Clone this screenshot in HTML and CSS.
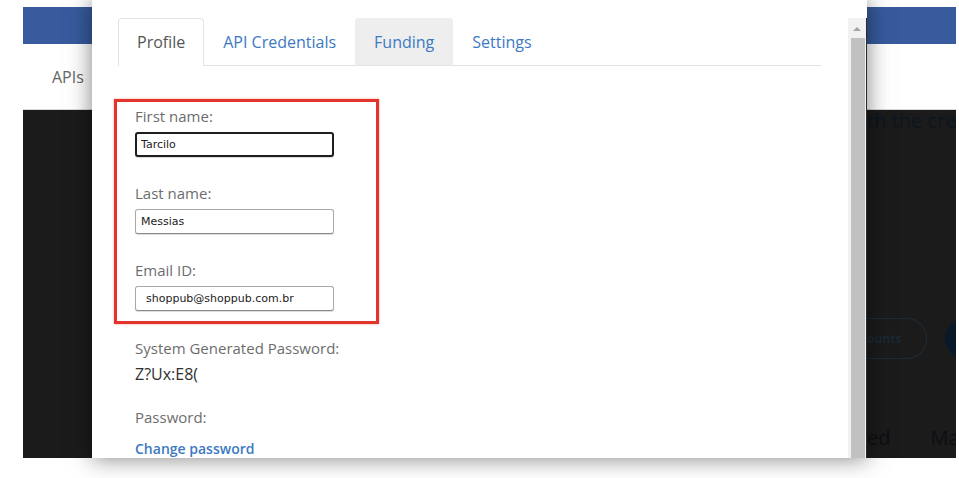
FILE: index.html
```html
<!DOCTYPE html>
<html lang="en">
<head>
    <meta charset="UTF-8">
    <title>My Account - Profile</title>
    <link rel="stylesheet" href="styles.css">
</head>
<body>
    <div class="page">
        <div class="topbar"></div>
        <div class="nav">
            <span class="nav-link">APIs</span>
        </div>
        <div class="backdrop">
            <div class="behind">
                <p class="behind-title">th the cred</p>
                <div class="behind-buttons">
                    <span class="pill">ounts</span>
                    <span class="dot"></span>
                </div>
                <div class="behind-cols">
                    <span>ed</span>
                    <span>Ma</span>
                </div>
            </div>
        </div>
    </div>

    <!-- Account modal -->
    <div class="modal">
        <div class="modal-body">
            <ul class="tabs">
                <li class="tab active">Profile</li>
                <li class="tab">API Credentials</li>
                <li class="tab hover">Funding</li>
                <li class="tab">Settings</li>
            </ul>

            <div class="highlight">
                <label for="firstName">First name:</label>
                <input type="text" id="firstName" class="focused" value="Tarcilo">

                <label for="lastName">Last name:</label>
                <input type="text" id="lastName" value="Messias">

                <label for="email">Email ID:</label>
                <input type="text" id="email" class="email" value="shoppub@shoppub.com.br">
            </div>

            <div class="info">
                <p class="info-label">System Generated Password:</p>
                <p class="info-value">Z?Ux:E8(</p>

                <p class="info-label spaced">Password:</p>
                <a class="change-link" href="#">Change password</a>
            </div>
        </div>

        <div class="scrollbar">
            <span class="scroll-arrow"></span>
            <span class="scroll-thumb"></span>
        </div>
    </div>
</body>
</html>
```

FILE: styles.css
```css
* {
    box-sizing: border-box;
}
body {
    margin: 0;
    background: #fff;
    font-family: "Open Sans", Arial, sans-serif;
    width: 959px;
    height: 478px;
    overflow: hidden;
    position: relative;
}
.page {
    margin: 7px 3px 0 23px;
    height: 451px;
    display: flex;
    flex-direction: column;
}
.topbar {
    height: 37px;
    background: #375b9d;
}
.nav {
    height: 66px;
    background: #fff;
    border-bottom: 1px solid #d8d8d8;
    padding-left: 29px;
    display: flex;
    align-items: center;
}
.nav-link {
    font-size: 16px;
    color: #666;
}
.backdrop {
    flex: 1;
    background: #1b1b1b;
    overflow: hidden;
}
.behind {
    padding-left: 844px;
    white-space: nowrap;
}
.behind-title {
    margin: 0;
    font-size: 20px;
    line-height: 22px;
    color: #0b1620;
}
.behind-buttons {
    margin-top: 186px;
    display: flex;
    gap: 18px;
    align-items: center;
}
.pill {
    flex-shrink: 0;
    height: 41px;
    width: 60px;
    border: 1px solid #1f2c38;
    border-left: none;
    border-radius: 0 21px 21px 0;
    display: flex;
    align-items: center;
    font-size: 12px;
    font-weight: 700;
    color: #1a2835;
}
.dot {
    flex-shrink: 0;
    width: 41px;
    height: 41px;
    border-radius: 50%;
    background: #0a1929;
}
.behind-cols {
    margin-top: 65px;
    display: flex;
    gap: 40px;
    font-size: 20px;
    color: #0b0f14;
}

/* modal */
.modal {
    position: absolute;
    left: 92px;
    top: 0;
    width: 775px;
    height: 458px;
    background: #fff;
    box-shadow: 0 0 22px rgba(0, 0, 0, 0.5);
    overflow: hidden;
}
.modal-body {
    padding: 18px 0 0 26px;
    width: 729px;
}
.tabs {
    list-style: none;
    margin: 0;
    padding: 0;
    display: flex;
    border-bottom: 1px solid #e3e3e3;
}
.tab {
    height: 47px;
    line-height: 47px;
    padding: 0 18px;
    font-size: 16px;
    color: #3d79c2;
    border: 1px solid transparent;
    border-bottom: none;
    border-radius: 4px 4px 0 0;
    margin-bottom: -1px;
}
.tab.active {
    color: #555;
    background: #fff;
    border-color: #e3e3e3;
    height: 48px;
}
.tab.hover {
    background: #eee;
}
.highlight {
    margin: 33px 0 0 -4px;
    width: 265px;
    border: 3px solid #e3342c;
    box-shadow: 0 0 2px rgba(227, 52, 44, 0.5);
    padding: 4px 0 10px 18px;
    display: flex;
    flex-direction: column;
    align-items: flex-start;
}
.highlight label {
    font-size: 15px;
    line-height: 20px;
    color: #6d6d6d;
}
.highlight input {
    margin: 6px 0 26px;
    width: 199px;
    height: 25px;
    border: 1px solid #a9a9a9;
    border-bottom-color: #8a8a8a;
    border-radius: 3px;
    padding: 0 5px;
    font-family: "DejaVu Sans", Verdana, sans-serif;
    font-size: 11px;
    color: #222;
    box-shadow: 0 1px 1px rgba(0, 0, 0, 0.15);
}
.highlight input:last-child {
    margin-bottom: 0;
}
.highlight input.focused {
    border: 2px solid #1e1e1e;
    padding: 0 4px;
}
.highlight input.email {
    padding-left: 10px;
}
.info {
    padding: 14px 0 0 17px;
}
.info-label {
    margin: 0;
    font-size: 15px;
    line-height: 20px;
    color: #6d6d6d;
}
.info-label.spaced {
    margin-top: 23px;
}
.info-value {
    margin: 6px 0 0;
    font-size: 16px;
    line-height: 20px;
    color: #2f2f2f;
}
.change-link {
    display: block;
    margin-top: 12px;
    font-size: 14px;
    line-height: 20px;
    font-weight: 600;
    color: #3d79c2;
    text-decoration: none;
}

/* fake scrollbar */
.scrollbar {
    position: absolute;
    right: 0;
    top: 18px;
    bottom: 0;
    width: 19px;
    background: #f1f1f1;
    border-right: 1px solid #2a2a2a;
}
.scroll-arrow {
    position: absolute;
    left: 5px;
    top: 9px;
    width: 0;
    height: 0;
    border-left: 4px solid transparent;
    border-right: 4px solid transparent;
    border-bottom: 4px solid #a3a3a3;
}
.scroll-thumb {
    position: absolute;
    left: 3px;
    right: 1px;
    top: 20px;
    bottom: 0;
    background: #c1c1c1;
}
```
